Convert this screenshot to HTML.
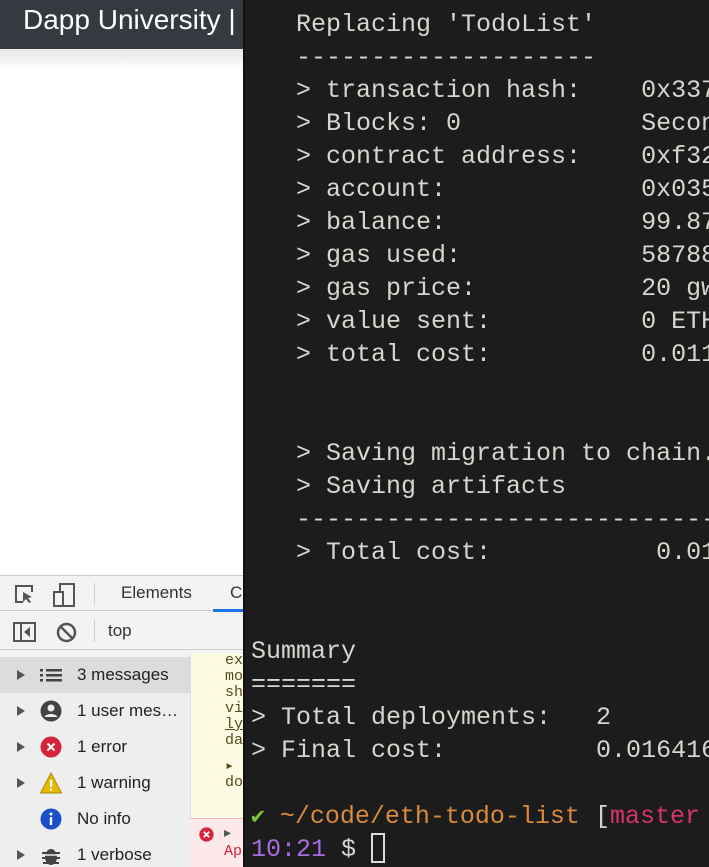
<!DOCTYPE html>
<html><head><meta charset="utf-8"><style>
*{margin:0;padding:0;box-sizing:border-box}
body{width:709px;height:867px;overflow:hidden;position:relative;background:#fff;font-family:"Liberation Sans",sans-serif}
.nav{position:absolute;left:0;top:0;width:243px;height:49px;background:#343a40;color:#fff;font-size:28px;padding:4px 0 0 23px;white-space:nowrap;overflow:hidden}
.shade{position:absolute;left:0;top:49px;width:243px;height:20px;background:linear-gradient(#e6e6e6,#fff)}
.dt{position:absolute;left:0;top:575px;width:243px;height:292px;background:#f2f2f2;overflow:hidden}
.tb1{position:absolute;top:0;left:0;width:243px;height:36px;border-top:1px solid #ccc;border-bottom:1px solid #ccc;background:#f3f3f3}
.tb2{position:absolute;top:38px;left:0;width:243px;height:37px;border-bottom:1px solid #ccc;background:#f3f3f3}
.side{position:absolute;top:82px;left:0;width:190px;height:220px;background:#eee}
.row{height:36px;display:flex;align-items:center;font-size:17px;color:#222;position:relative}
.row .tri{position:absolute;left:17px;width:0;height:0;border-left:8px solid #555;border-top:5px solid transparent;border-bottom:5px solid transparent}
.row .ic{position:absolute;left:40px;width:22px;height:22px}
.row span.t{position:absolute;left:77px}
.warn{position:absolute;left:190px;top:78px;width:53px;height:165px;background:#fdfbe3;border-left:1px solid #ddd;font-family:"Liberation Mono",monospace;font-size:15px;line-height:16px;color:#5a4a1a;padding:0 0 0 34px}
.err{position:absolute;left:190px;top:243px;width:53px;height:60px;background:#fde8ea;border-top:1px solid #f4b9bf}
.term{position:absolute;left:243px;top:0;width:466px;height:867px;background:#1c1c1c;border-left:2px solid #111;overflow:hidden}
.lines{position:absolute;left:6px;top:7.5px;font-family:"Liberation Mono",monospace;font-size:25px;color:#d6d6cf;width:900px}
.lines div{height:33px;line-height:33px;white-space:pre}
.o{color:#d98a3a}.m{color:#d6336c}.p{color:#a66ee0}.g{color:#7ec23a}
</style></head><body>
<div class="nav">Dapp University |</div>
<div class="shade"></div>
<div class="dt">
 <div class="tb1">
  <svg style="position:absolute;left:14px;top:8px" width="22" height="22" viewBox="0 0 22 22"><path d="M9 18H2V2h16v6" fill="none" stroke="#555" stroke-width="2"/><path d="M9 8l9 5-4 1 3 4-2 1-3-4-3 3z" fill="#555"/></svg>
  <svg style="position:absolute;left:53px;top:7px" width="24" height="24" viewBox="0 0 24 24"><rect x="7" y="1" width="14" height="22" fill="none" stroke="#555" stroke-width="2"/><rect x="1" y="9" width="9" height="14" fill="#f3f3f3" stroke="#555" stroke-width="2"/></svg>
  <div style="position:absolute;left:94px;top:7px;width:1px;height:22px;background:#ccc"></div>
  <span style="position:absolute;left:121px;top:7px;font-size:17px;color:#333">Elements</span>
  <span style="position:absolute;left:230px;top:7px;font-size:17px;color:#333">C</span>
  <div style="position:absolute;left:213px;top:33px;width:30px;height:3px;background:#1a73e8"></div>
 </div>
 <div class="tb2">
  <svg style="position:absolute;left:13px;top:9px" width="23" height="20" viewBox="0 0 23 20"><rect x="1" y="1" width="21" height="18" fill="none" stroke="#555" stroke-width="2"/><line x1="8" y1="1" x2="8" y2="19" stroke="#555" stroke-width="2"/><path d="M17 5v10l-6-5z" fill="#555"/></svg>
  <svg style="position:absolute;left:56px;top:9px" width="21" height="21" viewBox="0 0 21 21"><circle cx="10.5" cy="10.5" r="8.5" fill="none" stroke="#555" stroke-width="2.5"/><line x1="4.5" y1="4.5" x2="16.5" y2="16.5" stroke="#555" stroke-width="2.5"/></svg>
  <div style="position:absolute;left:94px;top:7px;width:1px;height:22px;background:#ccc"></div>
  <span style="position:absolute;left:108px;top:8px;font-size:17px;color:#333">top</span>
 </div>
 <div class="side">
  <div class="row" style="background:#dcdcdc"><i class="tri"></i><svg class="ic" viewBox="0 0 22 22"><g fill="#444"><rect x="0" y="5" width="3" height="2.5"/><rect x="0" y="10" width="3" height="2.5"/><rect x="0" y="15" width="3" height="2.5"/><rect x="6" y="5" width="16" height="2.5"/><rect x="6" y="10" width="16" height="2.5"/><rect x="6" y="15" width="16" height="2.5"/></g></svg><span class="t">3 messages</span></div>
  <div class="row"><i class="tri"></i><svg class="ic" viewBox="0 0 22 22"><circle cx="11" cy="11" r="10.5" fill="#444"/><circle cx="11" cy="8" r="3.5" fill="#eee"/><path d="M4.5 17c2-4 11-4 13 0" fill="#eee"/></svg><span class="t">1 user mes…</span></div>
  <div class="row"><i class="tri"></i><svg class="ic" viewBox="0 0 22 22"><circle cx="11" cy="11" r="10.5" fill="#d6243a"/><path d="M7.5 7.5l7 7M14.5 7.5l-7 7" stroke="#fff" stroke-width="2"/></svg><span class="t">1 error</span></div>
  <div class="row"><i class="tri"></i><svg class="ic" viewBox="0 0 22 22"><path d="M11 1L21.5 21H0.5z" fill="#e6b800" stroke="#b08a00"/><rect x="10" y="8" width="2.2" height="7" fill="#fff"/><rect x="10" y="16.5" width="2.2" height="2.2" fill="#fff"/></svg><span class="t">1 warning</span></div>
  <div class="row"><svg class="ic" viewBox="0 0 22 22"><circle cx="11" cy="11" r="10.5" fill="#1a4fc9"/><rect x="9.8" y="9" width="2.4" height="8" fill="#fff"/><circle cx="11" cy="6" r="1.5" fill="#fff"/></svg><span class="t">No info</span></div>
  <div class="row"><i class="tri"></i><svg class="ic" viewBox="0 0 22 22"><ellipse cx="11" cy="13" rx="6" ry="8" fill="#444"/><path d="M2 9h18M2 14h18M3 19h16" stroke="#444" stroke-width="2"/><line x1="5" y1="11" x2="17" y2="11" stroke="#eee" stroke-width="1.5"/></svg><span class="t">1 verbose</span></div>
 </div>
 <div class="warn">ex<br>mo<br>sh<br>vi<br><u>ly</u><br>da<br><span style="display:block;height:10px"></span>▸<br>do</div>
 <div class="err"><svg style="position:absolute;left:9px;top:8px" width="15" height="15" viewBox="0 0 22 22"><circle cx="11" cy="11" r="10.5" fill="#d6243a"/><path d="M7 7l8 8M15 7l-8 8" stroke="#fff" stroke-width="2.5"/></svg><span style="position:absolute;left:34px;top:5px;font-size:14px;color:#555">▸</span><span style="position:absolute;left:34px;top:24px;font-family:'Liberation Mono',monospace;font-size:15px;color:#d6243a">Ap</span></div>
</div>
<div class="term"><div class="lines"><div>   Replacing 'TodoList'</div><div>   --------------------</div><div>   &gt; transaction hash:    0x337</div><div>   &gt; Blocks: 0            Seconds</div><div>   &gt; contract address:    0xf32</div><div>   &gt; account:             0x035</div><div>   &gt; balance:             99.87</div><div>   &gt; gas used:            58788</div><div>   &gt; gas price:           20 gwei</div><div>   &gt; value sent:          0 ETH</div><div>   &gt; total cost:          0.011</div><div> </div><div> </div><div>   &gt; Saving migration to chain.</div><div>   &gt; Saving artifacts</div><div>   -------------------------------</div><div>   &gt; Total cost:           0.01</div><div> </div><div> </div><div>Summary</div><div>=======</div><div>&gt; Total deployments:   2</div><div>&gt; Final cost:          0.016416</div><div> </div><div><span class="g" style="font-family:'DejaVu Sans Mono',monospace;font-size:23px">✔</span> <span class="o">~/code/eth-todo-list</span> [<span class="m">master</span></div><div><span class="p">10:21</span> $ <span style="display:inline-block;width:14px;height:30px;border:2px solid #ddd;vertical-align:-7px"></span></div></div></div>
</body></html>
